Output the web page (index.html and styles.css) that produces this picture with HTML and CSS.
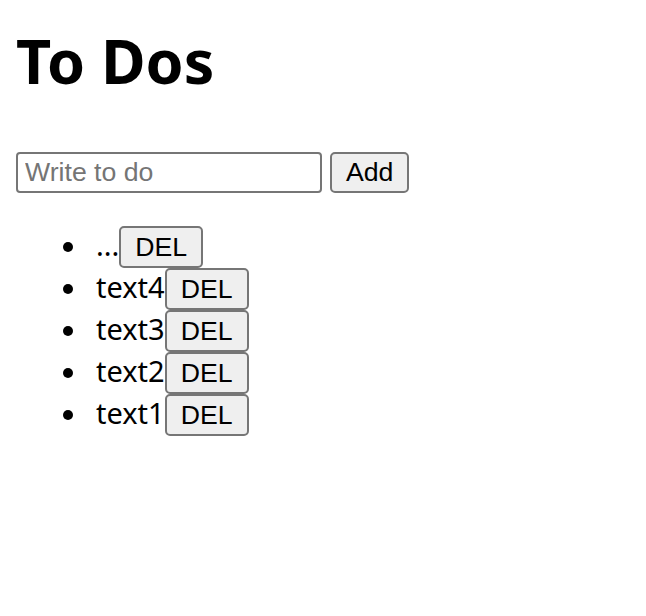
FILE: index.html
```html
<!DOCTYPE html>
<html>
<head>
<meta charset="utf-8">
<link rel="stylesheet" href="styles.css">
</head>
<body>
<h1 class="title">To Dos</h1>
<form class="todo-form">
  <input class="todo-input" type="text" placeholder="Write to do">
  <button class="btn btn-add" type="button">Add</button>
</form>
<ul class="todo-list">
  <li class="todo-item"><span class="todo-text">...</span><button class="btn btn-del" type="button">DEL</button></li>
  <li class="todo-item"><span class="todo-text">text4</span><button class="btn btn-del" type="button">DEL</button></li>
  <li class="todo-item"><span class="todo-text">text3</span><button class="btn btn-del" type="button">DEL</button></li>
  <li class="todo-item"><span class="todo-text">text2</span><button class="btn btn-del" type="button">DEL</button></li>
  <li class="todo-item"><span class="todo-text">text1</span><button class="btn btn-del" type="button">DEL</button></li>
</ul>
</body>
</html>
```

FILE: styles.css
```css
html, body {
  background: #ffffff;
}
body {
  margin: 16px;
  font-family: "Noto Sans", sans-serif;
  color: #000;
}
.title {
  margin: 13px 0 59px;
  font-size: 61px;
  line-height: 64px;
  font-weight: 700;
}
.todo-form {
  display: flex;
  gap: 8px;
  margin: 0;
}
.todo-input {
  box-sizing: border-box;
  width: 306px;
  height: 41px;
  margin: 0;
  padding: 2px 7px;
  border: 2px solid #767676;
  border-radius: 4px;
  font-family: "Liberation Sans", Arial, sans-serif;
  font-size: 26.67px;
  color: #000;
}
.todo-input::placeholder {
  color: #757575;
}
.btn {
  box-sizing: border-box;
  height: 42px;
  margin: 0;
  padding: 0 14px;
  border: 2px solid #767676;
  border-radius: 5px;
  background: #efefef;
  font-family: "Liberation Sans", Arial, sans-serif;
  font-size: 26.67px;
  color: #000;
}
.btn-add {
  height: 41px;
}
.todo-list {
  margin: 33px 0 0;
  padding-left: 80px;
  font-size: 29px;
  list-style: none;
}
.todo-item {
  line-height: 1;
}
.todo-item::before {
  content: "";
  display: inline-block;
  width: 10px;
  height: 10px;
  margin-left: -33px;
  margin-right: 23px;
  border-radius: 50%;
  background: #000;
  vertical-align: 4px;
}
.btn-del {
  vertical-align: baseline;
}
```
